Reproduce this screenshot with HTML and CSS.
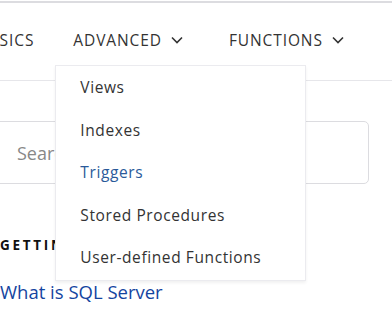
FILE: index.html
```html
<!DOCTYPE html>
<html>
<head>
    <title>SQL Server Tutorial</title>
    <link rel="stylesheet" href="styles.css">
</head>
<body>
    <header class="header">
        <nav class="nav">
            <a class="nav-item" href="#">BASICS</a>
            <div class="nav-item has-menu">
                ADVANCED
                <svg class="chev" width="12" height="8" viewBox="0 0 12 8"><path d="M1 1.5 L6 6.5 L11 1.5" fill="none" stroke="#333" stroke-width="1.6"/></svg>
                <ul class="dropdown">
                    <li><a href="#">Views</a></li>
                    <li><a href="#">Indexes</a></li>
                    <li><a class="active" href="#">Triggers</a></li>
                    <li><a href="#">Stored Procedures</a></li>
                    <li><a href="#">User-defined Functions</a></li>
                </ul>
            </div>
            <div class="nav-item has-menu">
                FUNCTIONS
                <svg class="chev" width="12" height="8" viewBox="0 0 12 8"><path d="M1 1.5 L6 6.5 L11 1.5" fill="none" stroke="#333" stroke-width="1.6"/></svg>
            </div>
        </nav>
    </header>
    <main class="main">
        <div class="search">
            <input type="text" placeholder="Search">
        </div>
        <h3 class="section-title">GETTING STARTED</h3>
        <a class="link" href="#">What is SQL Server</a>
    </main>
</body>
</html>
```
FILE: styles.css
```css
body {
    margin: 0;
    font-family: "Open Sans", sans-serif;
    color: #333;
    overflow: hidden;
    background: #fff;
}
.header {
    margin-top: 1px;
    border-top: 2px solid #dcdce0;
    border-bottom: 1px solid #e6e6ea;
    height: 77px;
}
.nav {
    display: flex;
    align-items: center;
    height: 74px;
    margin-left: -22px;
}
.nav-item {
    position: relative;
    display: flex;
    align-items: center;
    font-size: 15.5px;
    letter-spacing: 0.9px;
    color: #333;
    text-decoration: none;
    margin-right: 39px;
}
.nav-item.has-menu {
    margin-right: 46px;
}
.chev {
    margin-left: 9px;
}
.dropdown {
    position: absolute;
    top: 36px;
    left: -18px;
    width: 249px;
    margin: 0;
    padding: 0 0 1px;
    list-style: none;
    background: #fff;
    border: 1px solid #ebebef;
    box-shadow: 0 2px 3px rgba(0,0,0,0.06);
    z-index: 2;
}
.dropdown li a {
    display: block;
    height: 42.5px;
    line-height: 43px;
    padding-left: 24px;
    font-size: 15.5px;
    letter-spacing: 0.6px;
    color: #333;
    text-decoration: none;
    white-space: nowrap;
}
.dropdown li a.active {
    color: #2a5a9a;
}
.main {
    padding-top: 40px;
}
.search {
    margin-left: -20px;
    width: 389px;
}
.search input {
    box-sizing: border-box;
    width: 100%;
    height: 63px;
    border: 1px solid #dcdce0;
    border-radius: 5px;
    padding-left: 36px;
    font-family: "Open Sans", sans-serif;
    font-size: 18px;
    outline: none;
}
.search input::placeholder {
    color: #888;
}
.section-title {
    margin: 52px 0 0;
    font-size: 13.5px;
    font-weight: bold;
    letter-spacing: 2.7px;
    color: #111;
}
.link {
    display: block;
    margin-top: 25px;
    font-size: 18.5px;
    color: #1444a0;
    text-decoration: none;
}
```
